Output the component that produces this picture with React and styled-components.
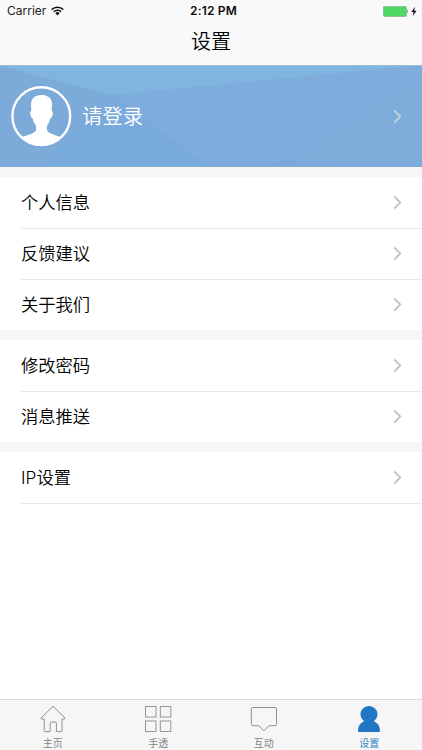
import styled, { createGlobalStyle } from "styled-components";

const groups = [
  { items: ["个人信息", "反馈建议", "关于我们"] },
  { items: ["修改密码", "消息推送"] },
  { items: ["IP设置"], last: true },
];

const tabs = [
  { label: "主页", icon: <HomeIcon /> },
  { label: "手透", icon: <GridIcon /> },
  { label: "互动", icon: <ChatIcon /> },
  { label: "设置", icon: <UserIcon />, active: true },
];

function WifiIcon() {
  return (
    <svg width="13" height="10" viewBox="0 0 13 10">
      <g fill="none" stroke="#111" strokeWidth="1.5">
        <path d="M0.7 3.6 A8.2 8.2 0 0 1 12.3 3.6" />
        <path d="M2.8 5.7 A5.2 5.2 0 0 1 10.2 5.7" />
      </g>
      <path d="M4.3 7.2 A3.1 3.1 0 0 1 8.7 7.2 L6.5 9.4 Z" fill="#111" />
    </svg>
  );
}

function BatteryIcon() {
  return (
    <svg width="34" height="11" viewBox="0 0 34 11">
      <rect x="0.4" y="0.4" width="23" height="10" rx="1.2" fill="#4cd964" stroke="#8aa790" strokeWidth="0.7" />
      <path d="M24.2 3.8 Q25.8 5.4 24.2 7 Z" fill="#444" />
      <path d="M32 0.8 L28.3 6 H30.6 L29.8 10 L33.6 4.7 H31.2 Z" fill="#111" />
    </svg>
  );
}

function HomeIcon() {
  return (
    <svg width="28" height="28" viewBox="0 0 28 28">
      <path
        d="M14 1.3 L26 13 Q26.4 14 25.4 14 H23 V25.6 Q23 26.6 22 26.6 H17.4 V18.1 Q17.4 17.1 16.4 17.1 H12.2 Q11.2 17.1 11.2 18.1 V26.6 H6.2 Q5.2 26.6 5.2 25.6 V14 H2.6 Q1.6 14 2 13 Z"
        fill="none"
        stroke="#909090"
        strokeLinejoin="round"
      />
    </svg>
  );
}

function GridIcon() {
  return (
    <svg width="28" height="28" viewBox="0 0 28 28">
      <g fill="none" stroke="#969696">
        <rect x="1.5" y="1.5" width="10.5" height="10.5" />
        <rect x="16.3" y="1.5" width="10.5" height="10.5" />
        <rect x="1.5" y="16" width="10.5" height="10.5" />
        <rect x="16.3" y="16" width="10.5" height="10.5" />
      </g>
    </svg>
  );
}

function ChatIcon() {
  return (
    <svg width="28" height="28" viewBox="0 0 28 28">
      <path
        d="M2.8 2.5 H25 Q26.5 2.5 26.5 4 V19.2 Q26.5 20.7 25 20.7 H19 L14.8 25 Q13.9 25.9 13 25 L8.8 20.7 H2.8 Q1.3 20.7 1.3 19.2 V4 Q1.3 2.5 2.8 2.5 Z"
        fill="none"
        stroke="#909090"
      />
    </svg>
  );
}

function UserIcon() {
  return (
    <svg width="28" height="28" viewBox="0 0 28 28">
      <path
        d="M14 1 C9.3 1 5.5 4.7 5.5 9.3 C5.5 12.2 7 14.7 9.2 16.2 C5.4 17.8 3 21 3 25.8 Q3 27 4.2 27 H23.8 Q25 27 25 25.8 C25 21 22.6 17.8 18.8 16.2 C21 14.7 22.5 12.2 22.5 9.3 C22.5 4.7 18.7 1 14 1 Z"
        fill="#2177c3"
      />
    </svg>
  );
}

function Chevron({ color = "#c3c3c8" }) {
  return (
    <svg width="10" height="15" viewBox="0 0 10 15">
      <path d="M1.3 1.5 L7.3 7.5 L1.3 13.5" fill="none" stroke={color} strokeWidth="1.9" />
    </svg>
  );
}

function AvatarIcon() {
  return (
    <svg width="62" height="62" viewBox="0 0 62 62">
      <defs>
        <clipPath id="avatar">
          <circle cx="31.3" cy="31.2" r="29.5" />
        </clipPath>
      </defs>
      <circle cx="31.3" cy="31.2" r="28.9" fill="none" stroke="#fff" strokeWidth="2.4" />
      <path
        clipPath="url(#avatar)"
        d="M31.5 10 C34.5 10 36.5 10.5 38 11.7 C41 12.8 42.2 16.2 41.9 20.5 L41.7 26 C43.1 26.2 43 28.2 42.4 30.4 C42 32 41.2 33 40.4 33.2 C39.9 36 38.6 38.6 37 40.4 V45 C38 48.8 45 49.6 50.5 52 V62 H12 V52 C18 49.6 25 48.8 26 45 V40.4 C24.4 38.6 23.1 36 22.6 33.2 C21.8 33 21 32 20.6 30.4 C20 28.2 19.9 26.2 21.3 26 L21.1 20.5 C20.7 14 24.3 10 31.5 10 Z"
        fill="#fff"
      />
    </svg>
  );
}

function HeroPattern() {
  return (
    <svg width="422" height="102" viewBox="0 0 422 102">
      <rect width="422" height="102" fill="#7eaddd" />
      <path d="M0 0 H422 L111 30 L0 1 Z" fill="#80b5e0" />
      <path d="M0 1 L111 30 L44 102 H0 Z" fill="#7cabda" />
      <path d="M111 30 L209 102 H44 Z" fill="#78aadb" />
      <path d="M422 0 V7 L294 94 L422 102 Z" fill="#7eaddc" />
      <path d="M249 102 L292 93.5 L311 102 Z" fill="#79a8db" />
      <path d="M0 0.5 H422" stroke="#9dbdd4" />
      <path d="M0 101.5 H422" stroke="#86aacd" />
    </svg>
  );
}

const App = () => {
  return (
    <Screen>
      <GlobalStyle />
      <Header>
        <StatusBar>
          <Carrier>
            Carrier
            <WifiIcon />
          </Carrier>
          <Time>2:12 PM</Time>
          <Battery>
            <BatteryIcon />
          </Battery>
        </StatusBar>
        <Title>设置</Title>
      </Header>
      <Hero>
        <HeroBackground>
          <HeroPattern />
        </HeroBackground>
        <AvatarIcon />
        <Login>请登录</Login>
        <Chevron color="#c3cfdc" />
      </Hero>
      <Content>
        {groups.map((group) => (
          <Group key={group.items[0]}>
            {group.items.map((item, i) => (
              <Item key={item} $line={group.last || i < group.items.length - 1}>
                <span>{item}</span>
                <Chevron />
              </Item>
            ))}
          </Group>
        ))}
      </Content>
      <TabBar>
        {tabs.map((tab) => (
          <Tab key={tab.label} $active={tab.active}>
            {tab.icon}
            <span>{tab.label}</span>
          </Tab>
        ))}
      </TabBar>
    </Screen>
  );
};

const GlobalStyle = createGlobalStyle`
  * {
    box-sizing: border-box;
  }
  body {
    margin: 0;
    background: #fff;
    font-family: Inter, "Noto Sans CJK SC", sans-serif;
  }
  svg {
    display: block;
    flex-shrink: 0;
  }
`;
const Screen = styled.div`
  display: flex;
  flex-direction: column;
  width: 422px;
  height: 750px;
  overflow: hidden;
  color: #0c0c0c;
`;
const Header = styled.header`
  height: 65px;
  background: #f9f9f9;
`;
const StatusBar = styled.div`
  display: grid;
  grid-template-columns: 1fr auto 1fr;
  align-items: center;
  height: 22px;
  padding: 0 5px 0 7px;
  font-size: 12px;
  line-height: 22px;
`;
const Carrier = styled.div`
  display: flex;
  align-items: center;
  gap: 5px;
  color: #222;
`;
const Time = styled.div`
  font-weight: 600;
  letter-spacing: 0.2px;
  padding-left: 3px;
`;
const Battery = styled.div`
  display: flex;
  justify-content: flex-end;
`;
const Title = styled.h1`
  margin: 0;
  text-align: center;
  font-size: 20px;
  font-weight: 350;
  line-height: 41px;
  color: #000;
`;
const Hero = styled.section`
  position: relative;
  z-index: 0;
  display: flex;
  align-items: center;
  height: 102px;
  padding: 0 19px 0 10px;
`;
const HeroBackground = styled.div`
  position: absolute;
  inset: 0;
  z-index: -1;
`;
const Login = styled.span`
  flex: 1;
  margin-left: 10px;
  padding-top: 2px;
  color: #fff;
  font-size: 20.4px;
  font-weight: 350;
  line-height: 30px;
`;
const Content = styled.main`
  flex: 1;
`;
const Group = styled.section`
  border-top: 10px solid #f6f6f6;
`;
const Item = styled.div`
  display: flex;
  align-items: center;
  justify-content: space-between;
  height: 51px;
  margin-left: 21px;
  padding-right: 19px;
  font-size: 17.3px;
  font-weight: 350;
  line-height: 24px;
  color: #000;
  box-shadow: 0 1px 0 ${(props) => (props.$line ? "#e9e9ea" : "transparent")};
`;
const TabBar = styled.nav`
  display: grid;
  grid-template-columns: repeat(4, 1fr);
  height: 51px;
  background: #f6f6f6;
  border-top: 1px solid #dcdcdc;
`;
const Tab = styled.div`
  display: flex;
  flex-direction: column;
  align-items: center;
  padding-top: 5px;
  font-size: 10px;
  line-height: 20px;
  color: ${(props) => (props.$active ? "#2f7fc6" : "#858585")};
`;
export default App;
